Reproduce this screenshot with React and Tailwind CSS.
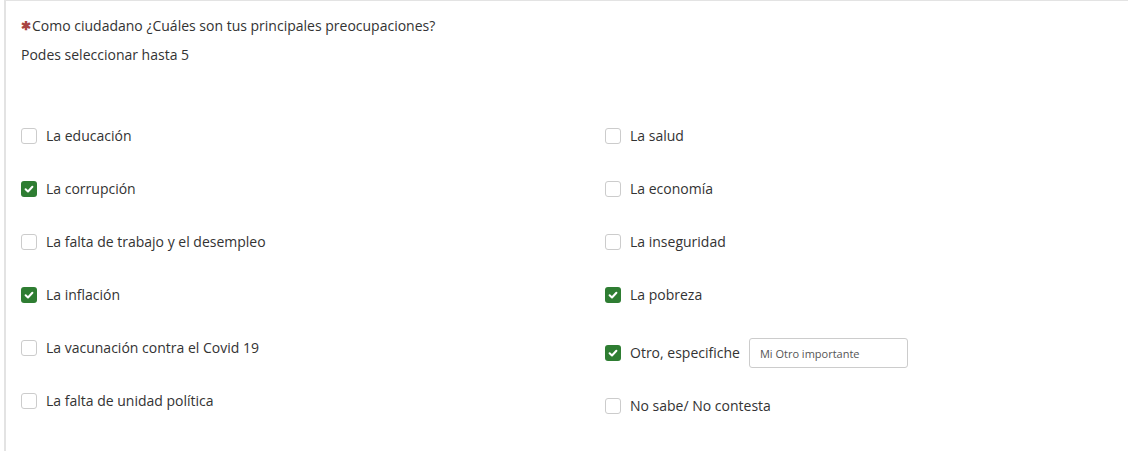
import React, { useState } from "react";

const LEFT = [
  { label: "La educación", checked: false },
  { label: "La corrupción", checked: true },
  { label: "La falta de trabajo y el desempleo", checked: false },
  { label: "La inflación", checked: true },
  { label: "La vacunación contra el Covid 19", checked: false },
  { label: "La falta de unidad política", checked: false },
];

const RIGHT = [
  { label: "La salud", checked: false },
  { label: "La economía", checked: false },
  { label: "La inseguridad", checked: false },
  { label: "La pobreza", checked: true },
];

const Box = ({ checked }) =>
  checked ? (
    <span className="flex h-4 w-4 shrink-0 items-center justify-center rounded-[3px] bg-[#2e7d32]">
      <svg width="10" height="10" viewBox="0 0 10 10">
        <path d="M1.6 5.2 L4 7.5 L8.4 2.7" fill="none" stroke="#fff" strokeWidth="2" strokeLinecap="round" strokeLinejoin="round" />
      </svg>
    </span>
  ) : (
    <span className="h-4 w-4 shrink-0 rounded-[3px] border border-[#cccccc] bg-white" />
  );

const Option = ({ label, checked, className = "" }) => (
  <label className={"flex h-6 items-center gap-[9px] " + className}>
    <Box checked={checked} />
    <span>{label}</span>
  </label>
);

export default function App() {
  const [otro, setOtro] = useState("Mi Otro importante");

  return (
    <div className="h-[451px] w-full bg-white font-['Open_Sans',sans-serif] text-[14px] leading-5 text-[#333333]">
      <div className="ml-[4px] h-full w-[1124px] border-l-2 border-t border-[#e3e3e3] pl-[15px] pt-[15px]">
        <div className="flex items-center">
          <span className="mr-[1px] text-[12px] font-bold leading-5 text-[#a94442]">✱</span>
          <span>Como ciudadano ¿Cuáles son tus principales preocupaciones?</span>
        </div>
        <p className="mt-[9px]">Podes seleccionar hasta 5</p>

        <div className="mt-[59px] grid grid-cols-[584px_1fr]">
          <div className="flex flex-col gap-[29px]">
            {LEFT.map((o) => (
              <Option key={o.label} {...o} />
            ))}
          </div>
          <div className="flex flex-col">
            {RIGHT.map((o, i) => (
              <Option key={o.label} {...o} className={i > 0 ? "mt-[29px]" : ""} />
            ))}
            <div className="mt-[31px] flex h-[30px] items-center gap-[9px]">
              <Box checked />
              <span>Otro, especifiche</span>
              <input
                value={otro}
                onChange={(e) => setOtro(e.target.value)}
                className="h-[30px] w-[159px] rounded-[3px] border border-[#cccccc] px-[10px] text-[11px] text-[#555555] outline-none"
              />
            </div>
            <Option label="No sabe/ No contesta" checked={false} className="mt-[26px]" />
          </div>
        </div>
      </div>
    </div>
  );
}
